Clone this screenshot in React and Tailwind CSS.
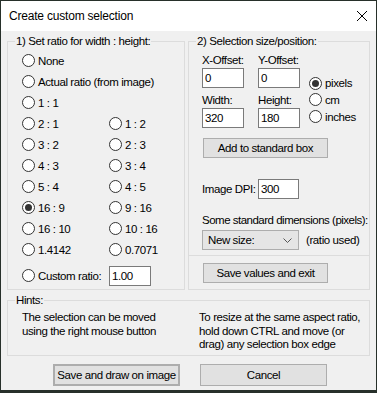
import React from 'react';

function Radio({ checked, label, className = "" }) {
  return (
    <div className={`flex items-center gap-[3px] whitespace-nowrap ${className}`}>
      <span className="w-[13px] h-[13px] rounded-full border border-[#333333] bg-white flex items-center justify-center shrink-0">
        {checked && <span className="w-[7px] h-[7px] rounded-full bg-[#333333]" />}
      </span>
      <span>{label}</span>
    </div>
  );
}

function TextBox({ value, className = "" }) {
  return (
    <div className={`h-[20px] border border-[#7a7a7a] bg-white pl-[2px] flex items-center ${className}`}>
      {value}
    </div>
  );
}

function Button({ label, className = "" }) {
  return (
    <div className={`flex items-center justify-center bg-[#e1e1e1] border border-[#adadad] whitespace-nowrap ${className}`}>
      {label}
    </div>
  );
}

function GroupLabel({ text }) {
  return (
    <div className="-mt-[8px] ml-[7px] px-[1px] w-fit bg-[#f0f0f0] leading-[14px] whitespace-nowrap">{text}</div>
  );
}

const ratios = [
  ["2 : 1", "1 : 2"],
  ["3 : 2", "2 : 3"],
  ["4 : 3", "3 : 4"],
  ["5 : 4", "4 : 5"],
  ["16 : 9", "9 : 16"],
  ["16 : 10", "10 : 16"],
  ["1.4142", "0.7071"],
];

export default function App() {
  return (
    <div className="w-[377px] h-[393px] bg-[#27302a] pt-px pl-px font-['Liberation_Sans',Arial,sans-serif] text-[11.5px] tracking-[-0.4px] text-black leading-[14px]">
      <div className="w-[375px] h-[389px] bg-[#f0f0f0] flex flex-col">
        {/* Title bar */}
        <div className="h-[30px] bg-white flex items-center justify-between pl-[8px] pr-[9px] shrink-0">
          <span className="text-[12px] tracking-[-0.2px]">Create custom selection</span>
          <svg width="10" height="10" viewBox="0 0 10 10">
            <path d="M0 0 L10 10 M10 0 L0 10" stroke="#000" strokeWidth="1" />
          </svg>
        </div>

        <div className="px-[6px] pt-[10px]">
          <div className="flex gap-[3px]">
            {/* Group 1 */}
            <div className="w-[178px] h-[249px] border border-[#dcdcdc]">
              <GroupLabel text="1) Set ratio for width : height:" />
              <div className="pt-[2px] pl-[14px]">
                <Radio label="None" className="h-[21px]" />
                <Radio label="Actual ratio (from image)" className="h-[21px]" />
                <Radio label="1 : 1" className="h-[21px]" />
                {ratios.map(([a, b]) => (
                  <div key={a} className="grid grid-cols-[87px_1fr] h-[21px]">
                    <Radio label={a} checked={a === "16 : 9"} />
                    <Radio label={b} />
                  </div>
                ))}
                <div className="flex items-center h-[21px] mt-[5px]">
                  <Radio label="Custom ratio:" className="w-[87px]" />
                  <TextBox value="1.00" className="w-[42px]" />
                </div>
              </div>
            </div>

            {/* Group 2 */}
            <div className="w-[182px] h-[249px] border border-[#dcdcdc] flex flex-col">
              <div className="h-[213px]">
                <GroupLabel text="2) Selection size/position:" />
                <div className="flex pl-[13px]">
                  <div className="w-[56px] flex flex-col">
                    <div className="mt-[5px] h-[14px]">X-Offset:</div>
                    <TextBox value="0" className="mt-[1px] w-[42px]" />
                    <div className="mt-[5px] h-[14px]">Width:</div>
                    <TextBox value="320" className="mt-[1px] w-[42px]" />
                  </div>
                  <div className="w-[51px] flex flex-col">
                    <div className="mt-[5px] h-[14px]">Y-Offset:</div>
                    <TextBox value="0" className="mt-[1px] w-[42px]" />
                    <div className="mt-[5px] h-[14px]">Height:</div>
                    <TextBox value="180" className="mt-[1px] w-[42px]" />
                  </div>
                  <div className="mt-[27px] flex flex-col">
                    <Radio label="pixels" checked className="h-[16px]" />
                    <Radio label="cm" className="h-[17px]" />
                    <Radio label="inches" className="h-[17px]" />
                  </div>
                </div>
                <Button label="Add to standard box" className="mt-[10px] ml-[14px] w-[125px] h-[20px]" />
                <div className="mt-[21px] ml-[13px] flex items-center h-[20px]">
                  <span className="w-[56px]">Image DPI:</span>
                  <TextBox value="300" className="w-[41px]" />
                </div>
                <div className="mt-[14px] ml-[13px] h-[14px] whitespace-nowrap tracking-[-0.5px]">Some standard dimensions (pixels):</div>
                <div className="mt-[3px] ml-[13px] flex items-center">
                  <div className="w-[97px] h-[20px] bg-[#e5e5e5] border border-[#adadad] flex items-center justify-between pl-[5px] pr-[6px]">
                    <span>New size:</span>
                    <svg width="9" height="5" viewBox="0 0 9 5">
                      <path d="M0.5 0.5 L4.5 4.5 L8.5 0.5" stroke="#555" strokeWidth="1" fill="none" />
                    </svg>
                  </div>
                  <span className="ml-[7px] whitespace-nowrap">(ratio used)</span>
                </div>
              </div>
              <div className="border-t border-[#dcdcdc]">
                <Button label="Save values and exit" className="mt-[7px] ml-[14px] w-[125px] h-[20px]" />
              </div>
            </div>
          </div>

          {/* Hints */}
          <div className="mt-[10px] w-[363px] h-[56px] border border-[#dcdcdc]">
            <GroupLabel text="Hints:" />
            <div className="mt-[4px] pl-[14px] flex leading-[13.5px]">
              <div className="w-[177px]">The selection can be moved<br />using the right mouse button</div>
              <div>To resize at the same aspect ratio,<br />hold down CTRL and move (or<br />drag) any selection box edge</div>
            </div>
          </div>

          {/* Buttons */}
          <div className="mt-[8px] flex gap-[20px] pl-[46px]">
            <Button label="Save and draw on image" className="w-[127px] h-[22px] border-2 border-[#0078d7]" />
            <Button label="Cancel" className="w-[127px] h-[22px]" />
          </div>
        </div>
      </div>
    </div>
  );
}
